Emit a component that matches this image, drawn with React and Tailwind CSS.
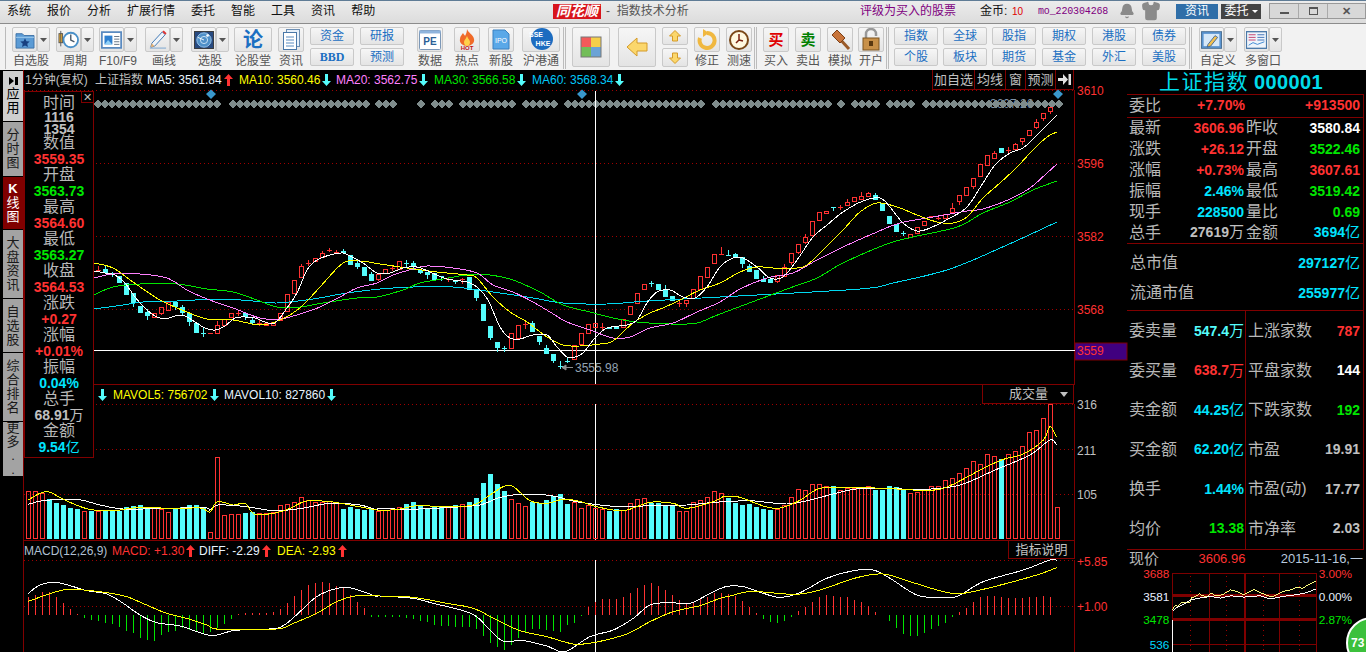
import React from 'react';
import { Bell, Shirt } from 'lucide-react';

const RED = '#ff3232';
const CYAN = '#54fcfc';
const GREEN = '#00e600';
const YELLOW = '#ffff00';
const PINK = '#ff80ff';
const MA30 = '#00e600';
const MA60 = '#00d8f0';

const xOf = (i) => 28 + 7 * i;

// [0 red / 1 cyan, body top, body bottom, wick top, wick bottom], first candle is i=10
const candles = [
  [0,270,270,266,270],[1,269,273,266,274],[1,274,274,272,277],[1,276,283],[1,283,295],[1,293,303,293,307],[1,306,313],[1,312,316,309,320],[0,313,317],[0,307,313,307,315],
  [0,302,310],[1,302,307,302,310],[1,307,313,305,315],[1,313,322,313,326],[1,323,333],[1,333,333,327,337],[0,333,333],[0,325,333,321,333],[0,319,325],[0,313,317],
  [0,313,313,310,316],[1,313,317,313,320],[1,320,323,317,325],[0,323,323,319,326],[0,323,325],[0,322,325,322,326],[0,313,320],[0,294,311],[0,280,293],[0,266,277,264,277],
  [0,263,263,260,266],[0,258,261],[0,253,257,251,257],[0,250,250,248,252],[0,252,252,250,254],[1,251,253,249,254],[1,255,265],[1,263,267,260,269],[1,267,276],[1,274,281,272,281],
  [0,274,279,274,281],[0,269,273],[0,268,268,265,271],[0,261,269],[1,263,263,260,267],[1,263,267,261,270],[1,270,273,270,274],[1,272,275,272,279],[1,273,280],[1,276,276,276,281],
  [0,279,279,277,282],[1,281,281,281,284],[0,279,279,278,284],[1,277,290],[1,289,298,289,301],[1,304,321],[1,326,338,326,340],[1,342,348,342,352],[1,348,348,346,352],[0,333,348],
  [0,325,338],[0,324,324,322,329],[1,323,332,321,332],[1,336,342,336,345],[1,348,354,345,354],[1,354,361,354,363],[1,366,366,361,369],[1,361,361,357,363],[0,345,359],[0,333,344],
  [0,324,333],[0,323,327],[0,327,327,323,330],[1,327,329],[1,327,329],[0,319,327],[0,306,314],[0,293,303],[0,284,289],[1,283,283,281,287],
  [1,284,290],[1,289,297,285,297],[1,296,301],[0,303,303,301,307],[0,300,303,300,307],[0,289,298],[0,276,289],[0,267,277],[0,254,263],[0,254,254,247,254],
  [1,255,255,250,255],[1,254,257,253,257],[1,257,264,257,268],[1,266,272,264,272],[1,270,279],[1,279,282,276,282],[1,279,283,278,283],[0,275,281,275,283],[0,267,276,264,276],[0,253,262,253,265],
  [0,244,252,244,254],[0,237,242,234,244],[0,221,235],[0,212,220],[0,211,213],[1,207,207,207,211],[0,207,207,205,210],[0,202,205,199,205],[0,197,201],[0,196,199,192,199],
  [0,193,196,192,197],[1,195,200,193,200],[1,203,211],[1,216,224],[1,224,232],[1,233,233,231,236],[0,234,237],[0,227,233],[0,221,225],[0,216,216],
  [0,218,218,216,220],[0,214,218],[0,208,212,203,212],[0,195,201,195,205],[0,187,195],[0,178,186,178,189],[0,164,176,164,177],[0,155,165],[0,153,158,151,158],[1,148,153],
  [0,150,150,147,153],[0,144,149,143,150],[0,138,141,138,145],[0,130,135],[0,122,127,119,129],[0,113,118,113,121],[0,107,111,107,114],
];

const ma5 = [[94,271],[105,273],[115,275],[125,283],[135,297],[145,308],[155,316],[165,319],[175,316],[185,316],[195,322],[205,328],[215,330],[225,326],[235,318],[245,317],[255,318],[265,322],[275,323],[287,308],[297,293],[307,270],[317,260],[330,255],[343,253],[352,257],[363,263],[377,273],[390,273],[403,268],[417,267],[430,272],[447,279],[467,282],[477,287],[488,300],[500,327],[510,338],[520,339],[533,335],[547,335],[557,347],[567,357],[575,357],[583,353],[595,338],[607,328],[627,325],[637,320],[647,303],[657,292],[670,290],[683,297],[695,298],[707,287],[720,267],[733,258],[743,258],[757,267],[770,278],[783,277],[797,260],[813,237],[827,225],[843,212],[863,201],[880,198],[890,207],[903,223],[917,231],[930,228],[950,218],[967,207],[983,183],[995,165],[1010,153],[1023,148],[1037,135],[1047,125],[1057,115]];
const ma10 = [[94,263],[113,268],[133,282],[160,300],[187,312],[207,319],[233,320],[260,325],[280,320],[300,308],[320,287],[343,263],[360,261],[380,264],[407,268],[437,272],[467,275],[477,278],[493,297],[510,312],[527,322],[547,337],[563,345],[580,346],[600,344],[613,341],[633,323],[650,313],[663,308],[680,300],[700,290],[720,283],[740,272],[757,267],[773,268],[797,268],[807,265],[823,250],[843,230],[860,212],[877,203],[897,207],[917,215],[937,222],[953,223],[967,217],[983,198],[1000,183],[1017,167],[1033,150],[1047,137],[1057,132]];
const ma20 = [[94,278],[113,274],[140,274],[167,278],[187,290],[207,299],[233,308],[260,318],[280,319],[300,314],[320,307],[340,297],[357,288],[377,283],[393,275],[413,269],[427,266],[453,268],[477,273],[493,285],[513,292],[533,302],[550,312],[567,322],[590,330],[613,338],[630,337],[650,328],[673,323],[697,312],[720,302],[740,289],[767,278],[793,273],[817,260],[843,247],[877,232],[900,223],[933,217],[967,211],[983,209],[1010,199],[1030,188],[1047,173],[1057,164]];
const ma30 = [[94,295],[113,287],[140,284],[177,284],[207,289],[233,292],[257,300],[277,307],[300,307],[323,303],[357,298],[377,297],[403,290],[420,283],[443,279],[467,275],[490,275],[513,280],[540,292],[563,305],[590,312],[613,318],[637,322],[670,324],[697,323],[720,314],[787,289],[817,278],[843,263],[887,244],[913,237],[957,227],[983,213],[1010,202],[1033,190],[1057,181]];
const ma60 = [[94,309],[123,305],[143,302],[177,301],[220,299],[253,301],[277,303],[313,299],[347,293],[380,289],[413,287],[453,287],[493,292],[533,298],[563,303],[607,304],[647,301],[720,297],[860,289],[893,283],[950,269],[1007,245],[1057,222]];

const diamondRuns = [[98,218],[233,366],[379,399],[421,421],[435,449],[463,512],[526,555],[568,702],[716,828],[841,841],[855,876],[890,912],[926,1059]];
const diamonds = diamondRuns.flatMap(([a, b]) => {
  const out = [];
  for (let x = a; x <= b; x += 7) out.push(x);
  return out;
});

const volTops = [
  ...[153,153,160,177,189,195,204,207,213,213,213,212,212,212,200,197,195,207,202,208,216,205,201,195,195,202,277,52,225,223,222,219,216,220,220,215,196,192,186,172,181,186,187,184,190,207,201,206,209,206,214,211,207,202].map((z) => 440 + z / 3),
  ...[192,186,197,206,202,202,199,195,192,186,174,129,102,132,153,178,190,198,185,190,180,168,162,192,185,205,195,205,208,213,208,210,190,178,175,190,190,195,195,214,214,187,181,172,154,160,174].map((z) => 440 + z / 3),
  ...[368,375,372,381,387,390,388,376,352,328,331,313,313,319,319,331,325,325,325,319,331,331,319,322,328,340,337,331,319,319,301,295,280,265,244,253,223,229,238,223,214,199,157,151,115,73,382].map((z) => 380 + z / 3),
];
const volColors =
  'rrrcccccrcrcccccccrrrcccccrrrrrccrrrrrrrrrrrrcccccrrrr' +
  'ccccccrcrccccccrrrccccccrrrrrccrrrrccccrrrrrrrc' +
  'ccccccrrrrrrrrcrrrrrcccccrrrrrrrrrrrrrcrrrrrrrr';

const fromZ = (pts, bx, by) => pts.map(([x, y]) => [bx + x / 3, by + y / 3]);

const volYellow = [
  ...fromZ([[85,180],[120,160],[148,156],[190,178],[250,203],[290,211],[350,211],[400,204],[470,202],[500,207],[600,204],[630,216],[652,185],[700,195],[735,190],[765,223],[830,218],[870,205],[920,183],[990,185],[1050,195],[1130,210]], 0, 440),
  ...fromZ([[0,212],[60,207],[110,197],[200,200],[280,195],[330,165],[370,140],[400,140],[450,182],[500,190],[550,178],[600,184],[650,200],[730,212],[810,187],[880,190],[920,205],[1000,185],[1030,170]], 380, 440),
  ...fromZ([[0,350],[30,352],[100,378],[140,385],[180,375],[220,355],[270,325],[360,323],[470,325],[550,330],[640,325],[760,265],[820,238],[880,222],[940,180],[960,140],[980,172]], 730, 380),
];
const volWhite = [
  ...fromZ([[85,193],[130,182],[230,178],[300,195],[370,207],[470,206],[610,203],[630,210],[655,195],[740,200],[820,212],[900,206],[990,190],[1080,195],[1130,210]], 0, 440),
  ...fromZ([[0,205],[80,208],[200,203],[300,195],[350,175],[400,165],[470,163],[520,168],[600,187],[720,200],[810,197],[920,195],[1000,187]], 380, 440),
  ...fromZ([[0,365],[60,362],[170,372],[240,360],[330,337],[400,325],[560,328],[630,325],[700,312],[800,268],[900,225],[960,180],[980,195]], 730, 380),
];

const macdBars = [
  ...[472,465,455,455,470,490,507,522,535,540,543,550,552,560,572,580,595,600,603,585,575,572,565,570,575,578,575,565,552,538,522,520,519,519,519,517,507,488,468,450,435,430,427,430,438,445,465,487,503,530,532,532,532,532].map((z) => 440 + z / 3),
  ...[533,537,543,546,555,558,558,560,562,560,566,588,610,622,630,615,595,578,568,568,570,572,575,555,548,528,500,487,476,477,477,470,460,444,434,429,437,450,464,480,490,490,478,470,460,458,462].map((z) => 440 + z / 3),
  ...[648,663,680,698,716,725,728,722,710,692,680,665,650,645,647,650,652,660,667,678,697,705,722,745,762,767,767,760,748,738,730,712,696,683,667,652,648,648,652,653,655,653,651,650,648,650].map((z) => 380 + z / 3),
];
const diffLine = [
  ...fromZ([[85,460],[120,435],[165,427],[210,437],[260,452],[320,462],[370,490],[420,525],[470,548],[540,558],[600,578],[640,587],[700,572],[770,568],[830,565],[860,550],[900,515],[950,470],[1000,448],[1040,442],[1090,455],[1130,470]], 0, 440),
  ...fromZ([[0,468],[100,475],[160,490],[250,512],[290,530],[330,570],[370,603],[430,602],[500,618],[555,635],[630,590],[700,570],[760,535],[810,495],[870,488],[930,490],[990,460],[1030,442]], 380, 440),
  ...fromZ([[0,618],[40,620],[100,640],[150,652],[210,638],[290,595],[370,572],[430,570],[480,595],[560,645],[620,652],[680,650],[760,605],[880,570],[960,540],[980,541]], 730, 380),
];
const deaLine = [
  ...fromZ([[85,484],[130,468],[190,450],[250,450],[320,458],[380,470],[440,495],[500,520],[560,535],[620,555],[660,568],[830,567],[880,550],[950,520],[1010,485],[1070,467],[1130,468]], 0, 440),
  ...fromZ([[0,468],[100,472],[200,490],[280,505],[350,540],[420,572],[500,590],[580,612],[640,608],[740,582],[810,545],[880,515],[960,497],[1020,475]], 380, 440),
  ...fromZ([[0,648],[60,634],[120,638],[200,643],[270,630],[380,593],[460,582],[540,605],[640,635],[700,640],[800,618],[920,585],[980,563]], 730, 380),
];

const miniYellow = fromZ([[133,190],[140,178],[150,180],[160,168],[170,170],[185,170],[190,155],[205,148],[215,142],[225,148],[240,150],[250,140],[265,148],[285,145],[310,130],[330,135],[350,145],[380,130],[420,148],[440,150],[470,135],[500,128],[510,122],[530,125],[555,110],[570,104]], 1128, 545);
const miniWhite = fromZ([[133,195],[145,185],[170,172],[190,160],[215,155],[250,150],[280,155],[310,148],[350,152],[400,148],[430,158],[470,150],[510,145],[535,140],[570,128]], 1128, 545);

// smooth line through the read-off points
const smooth = (pts) => {
  let d = `M${pts[0][0]} ${pts[0][1]}`;
  for (let i = 0; i < pts.length - 1; i++) {
    const p0 = pts[i - 1] || pts[i];
    const p1 = pts[i];
    const p2 = pts[i + 1];
    const p3 = pts[i + 2] || p2;
    const c1x = p1[0] + (p2[0] - p0[0]) / 6;
    const c1y = p1[1] + (p2[1] - p0[1]) / 6;
    const c2x = p2[0] - (p3[0] - p1[0]) / 6;
    const c2y = p2[1] - (p3[1] - p1[1]) / 6;
    d += `C${c1x} ${c1y} ${c2x} ${c2y} ${p2[0]} ${p2[1]}`;
  }
  return d;
};

const Curve = ({ pts, color }) => <path d={smooth(pts)} fill="none" stroke={color} strokeWidth="1" shapeRendering="crispEdges" />;

const Dots = ({ y }) => (
  <line x1="24" x2="1074" y1={y + 0.5} y2={y + 0.5} stroke="#a00000" strokeDasharray="1 3" shapeRendering="crispEdges" />
);

const Arr = ({ up, color }) => (
  <svg width="9" height="12" viewBox="0 0 9 12" className="inline-block shrink-0">
    <path d={up ? 'M4.5 0 9 5H6v7H3V5H0z' : 'M4.5 12 9 7H6V0H3v7H0z'} fill={color} />
  </svg>
);

const Legend = ({ color, children, className = '' }) => (
  <span className={`flex items-center gap-[2px] whitespace-nowrap ${className}`} style={{ color }}>
    {children}
  </span>
);

const MainChart = () => (
  <svg viewBox="24 90 1103 294" className="block h-[294px] w-[1103px] overflow-visible">
    <Dots y={90} />
    <Dots y={163} />
    <Dots y={236} />
    <Dots y={309} />
    <line x1="1074.5" x2="1074.5" y1="90" y2="384" stroke="#800000" />
    <rect x="1075" y="343" width="52" height="17" fill="#40007f" stroke="#800000" />
    <text x="1077" y="95" fill={RED} fontSize="12">3610</text>
    <text x="1077" y="168" fill={RED} fontSize="12">3596</text>
    <text x="1077" y="241" fill={RED} fontSize="12">3582</text>
    <text x="1077" y="314" fill={RED} fontSize="12">3568</text>
    <text x="1077" y="355" fill={RED} fontSize="12">3559</text>
    <text x="990" y="108" fill="#7f93a8" fontSize="12">3607.26</text>
    {diamonds.map((x) => (
      <path key={x} d={`M${x - 4.5} 104 ${x} 99.5 ${x + 4.5} 104 ${x} 108.5z`} fill="#7f8c8c" shapeRendering="crispEdges" />
    ))}
    {[211, 582, 1058].map((x) => (
      <path key={x} d={`M${x - 5} 94 ${x} 89.5 ${x + 5} 94 ${x} 99z`} fill="#3a98cc" />
    ))}
    <line x1="24" x2="1075" y1="350.5" y2="350.5" stroke="#fff" shapeRendering="crispEdges" />
    <line x1="595.5" x2="595.5" y1="91" y2="384" stroke="#fff" shapeRendering="crispEdges" />
    <g shapeRendering="crispEdges">
      {candles.map(([kind, top, bot, wt = top, wb = bot], n) => {
        const cx = xOf(n + 10);
        const color = kind ? CYAN : RED;
        return (
          <g key={cx}>
            {wt < top && <line x1={cx + 0.5} x2={cx + 0.5} y1={wt} y2={top} stroke={color} />}
            {wb > bot && <line x1={cx + 0.5} x2={cx + 0.5} y1={bot} y2={wb} stroke={color} />}
            {top === bot ? (
              <line x1={cx - 2} x2={cx + 3} y1={top + 0.5} y2={top + 0.5} stroke={color} />
            ) : kind ? (
              <rect x={cx - 2} y={top} width="5" height={bot - top} fill={color} />
            ) : (
              <rect x={cx - 1.5} y={top + 0.5} width="4" height={bot - top} fill="none" stroke={color} />
            )}
          </g>
        );
      })}
    </g>
    <Curve pts={ma60} color={MA60} />
    <Curve pts={ma30} color={MA30} />
    <Curve pts={ma20} color={PINK} />
    <Curve pts={ma10} color={YELLOW} />
    <Curve pts={ma5} color="#fff" />
    <path d="M562 367.5h11M562 367.5l4-2.5v5z" stroke="#8c8c8c" fill="#8c8c8c" />
    <text x="575" y="372" fill="#93a3b3" fontSize="12">3555.98</text>
  </svg>
);

const VolumeChart = () => (
  <svg viewBox="24 404 1103 136" className="block h-[136px] w-[1103px] overflow-visible">
    <Dots y={404} />
    <Dots y={449} />
    <Dots y={494} />
    <line x1="1074.5" x2="1074.5" y1="404" y2="540" stroke="#800000" />
    <line x1="595.5" x2="595.5" y1="404" y2="540" stroke="#fff" shapeRendering="crispEdges" />
    <text x="1077" y="409" fill="#c0c0c0" fontSize="12">316</text>
    <text x="1077" y="455" fill="#c0c0c0" fontSize="12">211</text>
    <text x="1077" y="499" fill="#c0c0c0" fontSize="12">105</text>
    <g shapeRendering="crispEdges">
      {volTops.map((top, i) => {
        const cx = xOf(i);
        const y = Math.round(top);
        return volColors[i] === 'c' ? (
          <rect key={i} x={cx - 2} y={y} width="5" height={539 - y} fill={CYAN} />
        ) : (
          <rect key={i} x={cx - 1.5} y={y + 0.5} width="4" height={539 - y - 1} fill="none" stroke={RED} />
        );
      })}
    </g>
    <Curve pts={volWhite} color="#fff" />
    <Curve pts={volYellow} color={YELLOW} />
  </svg>
);

const MacdChart = () => (
  <svg viewBox="24 560 1103 92" className="block h-[92px] w-[1103px] overflow-visible">
    <Dots y={560} />
    <Dots y={606} />
    <line x1="1074.5" x2="1074.5" y1="560" y2="652" stroke="#800000" />
    <line x1="595.5" x2="595.5" y1="560" y2="652" stroke="#fff" shapeRendering="crispEdges" />
    <text x="1077" y="566" fill={RED} fontSize="12">+5.85</text>
    <text x="1077" y="611" fill={RED} fontSize="12">+1.00</text>
    <g shapeRendering="crispEdges">
      {macdBars.map((y, i) => (
        <line key={i} x1={xOf(i) + 0.5} x2={xOf(i) + 0.5} y1={y} y2="615" stroke={y < 615 ? RED : GREEN} />
      ))}
    </g>
    <Curve pts={diffLine} color="#fff" />
    <Curve pts={deaLine} color={YELLOW} />
  </svg>
);

const MiniChart = () => (
  <svg viewBox="1128 564 236 88" className="block h-[88px] w-[236px]">
    <g shapeRendering="crispEdges">
      <rect x="1172.5" y="571.5" width="146" height="90" fill="none" stroke="#800000" />
      <line x1="1172" x2="1318" y1="594.5" y2="594.5" stroke="#800000" strokeWidth="3" />
      <line x1="1172" x2="1318" y1="618.5" y2="618.5" stroke="#800000" strokeWidth="3" />
      <line x1="1172" x2="1318" y1="643.5" y2="643.5" stroke="#800000" />
      <line x1="1246" x2="1246" y1="571" y2="652" stroke="#800000" strokeWidth="2" />
      <line x1="1209.5" x2="1209.5" y1="571" y2="652" stroke="#800000" />
      <line x1="1281.5" x2="1281.5" y1="571" y2="652" stroke="#800000" />
      {[1190.5, 1227.5, 1264.5, 1301.5].map((x) => (
        <line key={x} x1={x} x2={x} y1="574" y2="652" stroke="#a00000" strokeDasharray="1 4" />
      ))}
      <line x1="1172.5" x2="1172.5" y1="619" y2="652" stroke="#fff" />
    </g>
    <polyline points={miniYellow.map((p) => p.join(',')).join(' ')} fill="none" stroke="#ffff80" shapeRendering="crispEdges" />
    <polyline points={miniWhite.map((p) => p.join(',')).join(' ')} fill="none" stroke="#fff" shapeRendering="crispEdges" />
    <text x="1169" y="576" textAnchor="end" fill={RED} fontSize="12">3688</text>
    <text x="1169" y="600" textAnchor="end" fill="#e8f0ff" fontSize="12">3581</text>
    <text x="1169" y="623" textAnchor="end" fill={GREEN} fontSize="12">3478</text>
    <text x="1169" y="649" textAnchor="end" fill="#00d8ff" fontSize="12">536</text>
    <text x="1321" y="576" fill={RED} fontSize="12">3.00%</text>
    <text x="1321" y="600" fill="#e8f0ff" fontSize="12">0.00%</text>
    <text x="1321" y="623" fill={GREEN} fontSize="12">2.87%</text>
  </svg>
);

const infoRows = [
  ['时间', 'l'], ['1116', 'g', 'h-[12px] leading-[12px]'], ['1354', 'g', 'h-[12px] leading-[12px]'], ['数值', 'l'], ['3559.35', 'r'], ['开盘', 'l'], ['3563.73', 'n'], ['最高', 'l'], ['3564.60', 'r'], ['最低', 'l'], ['3563.27', 'n'],
  ['收盘', 'l'], ['3564.53', 'r'], ['涨跌', 'l'], ['+0.27', 'r'], ['涨幅', 'l'], ['+0.01%', 'r'], ['振幅', 'l'], ['0.04%', 'c'], ['总手', 'l'], ['68.91万', 'g'], ['金额', 'l'], ['9.54亿', 'c'],
];
const infoColors = { g: '#c0c0c0', r: RED, n: GREEN, c: '#00e4ff' };

const InfoBox = () => (
  <div className="absolute left-0 top-[21px] flex h-[367px] w-[70px] flex-col items-center border border-[#800000] bg-black pt-[3px]">
    <button className="absolute right-0 top-0 flex h-[11px] w-[12px] items-center justify-center border-b border-l border-[#800000] text-[11px] leading-none text-[#c0c0c0]">
      ✕
    </button>
    {infoRows.map(([text, kind, h], i) =>
      kind === 'l' ? (
        <div key={i} className="h-[16px] text-[16px] leading-[16px] text-[#b8b8b8]">{text}</div>
      ) : (
        <div key={i} className={`${h || 'h-[16px] leading-[16px]'} flex items-center text-[14px] font-bold`} style={{ color: infoColors[kind] }}>
          {text.replace(/[万亿]/, '')}
          {/[万亿]/.test(text) && <span className="font-normal">{text.slice(-1)}</span>}
        </div>
      ),
    )}
  </div>
);

const tabs = [
  { text: '应用', cls: 'h-[50px] bg-[#cfcfcf] text-black', head: true },
  { text: '分时图', cls: 'h-[54px] bg-[#a3a3a3] text-[#1a1a1a]' },
  { text: 'K线图', cls: 'h-[52px] bg-[#800000] text-white' },
  { text: '大盘资讯', cls: 'h-[68px] bg-[#a3a3a3] text-[#1a1a1a]' },
  { text: '自选股', cls: 'h-[53px] bg-[#a3a3a3] text-[#1a1a1a]' },
  { text: '综合排名', cls: 'h-[68px] bg-[#a3a3a3] text-[#1a1a1a]' },
  { text: '更多..', cls: 'h-[54px] bg-[#a3a3a3] text-[#1a1a1a]' },
];

const SideTabs = () => (
  <div className="flex w-[23px] shrink-0 flex-col gap-[1px] pl-[3px] pt-[1px]">
    {tabs.map((t) => (
      <div key={t.text} className={`flex w-[20px] flex-col items-center justify-center text-[13px] leading-[14px] ${t.cls}`}>
        {t.head && (
          <svg width="9" height="8" viewBox="0 0 9 8" className="mb-[2px]">
            <path d="M0 0 5 4 0 8zM6 0h3v8H6z" fill="#000" />
          </svg>
        )}
        {[...t.text].map((c, i) => (
          <span key={i} className={c === 'K' ? 'font-bold' : ''}>{c}</span>
        ))}
      </div>
    ))}
  </div>
);

const Val = ({ color, children, unit }) => (
  <span className="flex items-center whitespace-nowrap text-[14px] font-bold" style={{ color }}>
    {children}
    {unit && <span className="text-[15px] font-normal">{unit}</span>}
  </span>
);

const Cell = ({ label, color, value, unit, cls = 'w-[119px]' }) => (
  <div className={`flex items-center justify-between ${cls}`}>
    <span className="whitespace-nowrap text-[16px] leading-[20px] text-[#b8b8b8]">{label}</span>
    <Val color={color} unit={unit}>{value}</Val>
  </div>
);

const quoteRows = [
  ['最新', RED, '3606.96', '昨收', '#fff', '3580.84'],
  ['涨跌', RED, '+26.12', '开盘', GREEN, '3522.46'],
  ['涨幅', RED, '+0.73%', '最高', RED, '3607.61'],
  ['振幅', '#00e4ff', '2.46%', '最低', GREEN, '3519.42'],
  ['现手', '#00e4ff', '228500', '量比', GREEN, '0.69'],
];

const statRows = [
  ['委卖量', CYAN, '547.4', '万', '上涨家数', RED, '787'],
  ['委买量', RED, '638.7', '万', '平盘家数', '#fff', '144'],
  ['卖金额', '#00e4ff', '44.25', '亿', '下跌家数', GREEN, '192'],
  ['买金额', '#00e4ff', '62.20', '亿', '市盈', '#c0c0c0', '19.91'],
  ['换手', '#00e4ff', '1.44%', '', '市盈(动)', '#c0c0c0', '17.77'],
  ['均价', GREEN, '13.38', '', '市净率', '#c0c0c0', '2.03'],
];

const RightPanel = () => (
  <div className="relative flex h-[582px] w-[239px] shrink-0 flex-col overflow-hidden">
    <div className="flex h-[24px] items-center justify-center pr-[11px] font-bold leading-none text-[#00dcea]">
      <span className="text-[21px] font-normal tracking-[1.5px]">上证指数</span>
      <span className="ml-[5px] text-[20px] tracking-[0.4px]">000001</span>
    </div>
    <div className="w-[237px] border-b border-t border-r border-[#800000] pl-[2px] pr-[3px]">
      <div className="flex h-[22px] items-center justify-between">
        <span className="text-[16px] leading-[20px] text-[#b8b8b8]">委比</span>
        <span className="ml-[36px] mr-auto"><Val color={RED}>+7.70%</Val></span>
        <Val color={RED}>+913500</Val>
      </div>
    </div>
    <div className="w-[237px] border-b border-r border-[#800000] px-[2px]">
      <div className="flex h-[125px] flex-col">
        {quoteRows.map(([a, c1, v1, b, c2, v2]) => (
          <div key={a} className="flex h-[21px] items-center gap-[2px]">
            <Cell label={a} color={c1} value={v1} cls="w-[115px]" />
            <Cell label={b} color={c2} value={v2} cls="w-[114px]" />
          </div>
        ))}
        <div className="flex h-[20px] items-center gap-[2px]">
          <Cell label="总手" color="#c0c0c0" value="27619" unit="万" cls="w-[115px]" />
          <Cell label="金额" color="#00e4ff" value="3694" unit="亿" cls="w-[114px]" />
        </div>
      </div>
    </div>
    <div className="w-[237px] border-b border-r border-[#800000] px-[3px]">
      <div className="flex h-[33px] items-end justify-between pb-[2px]">
        <span className="text-[16px] text-[#b8b8b8]">总市值</span>
        <Val color="#00e4ff" unit="亿">297127</Val>
      </div>
      <div className="flex h-[33px] items-center justify-between">
        <span className="text-[16px] text-[#b8b8b8]">流通市值</span>
        <Val color="#00e4ff" unit="亿">255977</Val>
      </div>
    </div>
    <div className="relative flex h-[239px] w-[237px] flex-col border-b border-r border-[#800000] pt-[1px]">
      <div className="absolute left-[118px] top-0 h-full w-px bg-[#800000]" />
      {statRows.map(([a, c1, v1, u, b, c2, v2]) => (
        <div key={a} className="flex h-[39.6px] items-center pl-[2px]">
          <div className="flex w-[115px] items-center justify-between">
            <span className="text-[16px] text-[#b8b8b8]">{a}</span>
            <Val color={c1} unit={u}>{v1}</Val>
          </div>
          <div className="ml-[4px] flex w-[112px] items-center justify-between">
            <span className="whitespace-nowrap text-[16px] text-[#b8b8b8]">{b}</span>
            <Val color={c2}>{v2}</Val>
          </div>
        </div>
      ))}
    </div>
    <div className="flex h-[16px] items-center justify-between pl-[2px] pr-[3px] pt-[3px] text-[13px]">
      <span className="text-[15px] text-[#b8b8b8]">现价</span>
      <span className="ml-[4px] text-[#ff3232]">3606.96</span>
      <span className="text-[#b8c8dc]">2015-11-16,一</span>
    </div>
    <MiniChart />
    <div className="absolute left-[219px] top-[547px] flex h-[52px] w-[52px] items-center rounded-full border-2 border-white bg-[#3cc03c] pl-[3px] text-[12px] font-bold text-white">
      73
    </div>
  </div>
);

const btnFace = 'border border-[#c9c9c9] bg-gradient-to-b from-[#f6f6f6] to-[#e4e4e4] rounded-[2px]';

const ToolBtn = ({ label, cls = 'w-[26px]', arrow, ml, children }) => (
  <div className={`flex shrink-0 flex-col items-center ${cls} ${ml}`}>
    <div className="flex h-[25px] w-full">
      <div className={`flex h-full flex-1 items-center justify-center ${btnFace}`}>{children}</div>
      {arrow && (
        <div className={`flex h-full w-[13px] items-center justify-center ${btnFace}`}>
          <svg width="7" height="4" viewBox="0 0 7 4"><path d="M0 0h7L3.5 4z" fill="#555" /></svg>
        </div>
      )}
    </div>
    <span className="mt-[2px] whitespace-nowrap text-[12px] leading-[14px] text-[#555]">{label}</span>
  </div>
);

const Pair = ({ a, b, ml, boldB }) => (
  <div className={`flex w-[44px] shrink-0 flex-col gap-[3px] ${ml}`}>
    <div className={`flex h-[18px] items-center justify-center text-[12px] text-[#1b6fc2] ${btnFace}`}>{a}</div>
    <div className={`flex h-[18px] items-center justify-center text-[12px] text-[#1b6fc2] ${boldB ? "font-['Liberation_Serif'] font-bold" : ''} ${btnFace}`}>{b}</div>
  </div>
);

const Sep = ({ ml }) => <div className={`h-[42px] w-[3px] shrink-0 border-l border-r border-[#bcbcbc] ${ml}`} />;

const ICO = 'block';
const FolderIcon = () => (
  <svg width="20" height="18" viewBox="0 0 22 20" className={ICO}>
    <path d="M1 3h7l2 2h11v14H1z" fill="#5b9bd5" stroke="#3b6fa5" />
    <path d="M1 7h20" stroke="#a8d0f0" />
    <path d="m11 8 1.6 3.4 3.6.4-2.7 2.4.8 3.6L11 16l-3.3 1.8.8-3.6-2.7-2.4 3.6-.4z" fill="#173f80" />
  </svg>
);
const PeriodIcon = () => (
  <svg width="21" height="20" viewBox="0 0 23 22" className={ICO}>
    <rect x="1" y="4" width="4" height="10" fill="#f0b030" stroke="#555" />
    <path d="M3 1v17" stroke="#555" />
    <circle cx="14" cy="11" r="8" fill="#fff" stroke="#4a90c8" strokeWidth="2" />
    <path d="M14 5v6l4 2" fill="none" stroke="#456" strokeWidth="1.5" />
  </svg>
);
const NewsIcon = () => (
  <svg width="21" height="18" viewBox="0 0 24 20" className={ICO}>
    <rect x="1" y="1" width="22" height="18" fill="#fff" stroke="#5a8ac0" strokeWidth="2" />
    <rect x="4" y="5" width="9" height="10" fill="#2f80d0" />
    <path d="M15 6h6M15 9h6M15 12h6M15 15h6" stroke="#567" />
    <path d="M4 15l4-5 5 5z" fill="#8fd0f8" />
  </svg>
);
const PenIcon = () => (
  <svg width="21" height="21" viewBox="0 0 22 22" className={ICO}>
    <path d="M3 20h17" stroke="#7aa6d0" />
    <path d="M5 15 16 3l3 3L8 18l-4 1z" fill="#f0f4f8" stroke="#3c76b4" />
    <path d="M16 3l3 3 1.500-1.500-3-3z" fill="#d33" />
    <path d="M4 19l1-4 3 3z" fill="#e8b070" />
  </svg>
);
const RadarIcon = () => (
  <svg width="20" height="18" viewBox="0 0 22 20" className={ICO}>
    <rect x="0.500" y="0.500" width="21" height="19" fill="#274a80" stroke="#333" />
    <circle cx="11" cy="10" r="8" fill="#4f90c8" stroke="#9cc8ec" />
    <circle cx="11" cy="10" r="4" fill="none" stroke="#cfe6f8" />
    <circle cx="15" cy="5" r="1.500" fill="#fff" />
    <path d="M11 10 4 7" stroke="#fff" />
  </svg>
);
const DocIcon = () => (
  <svg width="18" height="21" viewBox="0 0 18 21" className={ICO}>
    <rect x="4.500" y="0.500" width="13" height="17" fill="#e6f0fa" stroke="#6d8fb4" />
    <rect x="1.500" y="3.500" width="13" height="17" fill="#fff" stroke="#4a78a8" />
    <path d="M4 8h8M4 11h8M4 14h8M4 17h8" stroke="#5a8cc0" />
  </svg>
);
const PeIcon = () => (
  <svg width="22" height="20" viewBox="0 0 22 20" className={ICO}>
    <rect x="0.500" y="0.500" width="21" height="19" rx="1" fill="#fff" stroke="#7c98b8" />
    <rect x="0.500" y="0.500" width="21" height="3" fill="#8fb4dc" />
    <text x="11" y="15" textAnchor="middle" fontSize="10" fontWeight="700" fill="#2b5f96">PE</text>
  </svg>
);
const HotIcon = () => (
  <svg width="20" height="22" viewBox="0 0 20 22" className={ICO}>
    <path d="M10 0c1 4 6 5 7 10 1 4-3 7-7 7s-8-3-7-7c0-3 2-4 3-6 1 2 2 2 2 3 1-2 2-4 2-7z" fill="#f06a28" />
    <path d="M10 7c1 3 3 4 3 6s-1 4-3 4-3-2-3-4 2-3 3-6z" fill="#ffd24a" />
    <text x="10" y="21" textAnchor="middle" fontSize="6" fontWeight="700" fill="#c01818">HOT</text>
  </svg>
);
const IpoIcon = () => (
  <svg width="18" height="21" viewBox="0 0 18 21" className={ICO}>
    <path d="M1 1h12l4 4v15H1z" fill="#5aa8e8" stroke="#3a80c0" />
    <text x="9" y="14" textAnchor="middle" fontSize="7" fill="#fff">IPO</text>
  </svg>
);
const HkIcon = () => (
  <svg width="30" height="23" viewBox="0 0 30 23" className={ICO}>
    <circle cx="16" cy="11" r="11" fill="#1c6cc0" />
    <text x="10" y="9" textAnchor="middle" fontSize="7" fontWeight="700" fill="#fff">SSE</text>
    <text x="17" y="18" textAnchor="middle" fontSize="7" fontWeight="700" fill="#fff">HKE</text>
  </svg>
);
const PaletteIcon = () => (
  <svg width="22" height="22" viewBox="0 0 22 22" className={ICO}>
    <rect x="1" y="1" width="10" height="10" fill="#f25a5a" />
    <rect x="11" y="1" width="10" height="10" fill="#f5cf4a" />
    <rect x="1" y="11" width="10" height="10" fill="#72bd58" />
    <rect x="11" y="11" width="10" height="10" fill="#6ba3d6" />
    <rect x="1" y="1" width="20" height="20" fill="none" stroke="#777" />
  </svg>
);
const BackIcon = () => (
  <svg width="22" height="20" viewBox="0 0 22 20" className={ICO}>
    <path d="M1 10 11 1v5h10v8H11v5z" fill="#fbd76c" stroke="#d49a28" />
  </svg>
);
const UpDown = ({ down }) => (
  <svg width="12" height="12" viewBox="0 0 12 12" className={ICO}>
    <path d={down ? 'M6 11.500 11.500 6H8.500V1h-5v5H.5z' : 'M6 .5 11.500 6H8.500v5h-5V6H.5z'} fill="#fbd76c" stroke="#d49a28" />
  </svg>
);
const RefreshIcon = () => (
  <svg width="20" height="21" viewBox="0 0 20 21" className={ICO}>
    <path d="M10 4a7.500 7.500 0 1 1-7 5" fill="none" stroke="#f0b840" strokeWidth="4" />
    <path d="M6 0l6 4-6 4z" fill="#f0b840" />
  </svg>
);
const ClockIcon = () => (
  <svg width="20" height="20" viewBox="0 0 20 20" className={ICO}>
    <circle cx="10" cy="10" r="9" fill="#fff8e0" stroke="#7a4818" strokeWidth="2" />
    <path d="M10 4v6l-3 3M10 10l4 1" fill="none" stroke="#7a2010" strokeWidth="1.500" />
  </svg>
);
const GavelIcon = () => (
  <svg width="21" height="22" viewBox="0 0 21 22" className={ICO}>
    <path d="M9 9 19 20" stroke="#9a5a28" strokeWidth="3" />
    <path d="M7 1l8 8-5 5-8-8z" fill="#c8743a" stroke="#7c4018" />
  </svg>
);
const LockIcon = () => (
  <svg width="20" height="23" viewBox="0 0 20 23" className={ICO}>
    <path d="M5 11V6a5 5 0 0 1 10 0v2" fill="none" stroke="#999" strokeWidth="2.500" />
    <rect x="2" y="10" width="16" height="12" fill="#c89048" stroke="#7c5420" />
    <rect x="8" y="13" width="4" height="5" fill="#5a3810" />
  </svg>
);
const CustomIcon = () => (
  <svg width="21" height="18" viewBox="0 0 24 20" className={ICO}>
    <rect x="0.500" y="0.500" width="23" height="19" fill="#5a94d0" stroke="#44698c" />
    <rect x="3" y="3" width="18" height="14" fill="#d6e8f8" />
    <path d="m8 15 8-10 3 2-8 10-4 1z" fill="#f2c050" stroke="#3a6090" />
  </svg>
);
const MultiIcon = () => (
  <svg width="21" height="18" viewBox="0 0 24 20" className={ICO}>
    <rect x="0.500" y="0.500" width="23" height="19" fill="#eef4fb" stroke="#4a78a8" strokeWidth="1.500" />
    <path d="M3 4h8M3 7h8M3 10h8" stroke="#c03060" />
    <path d="M13 4h8M13 7h8M13 10h8" stroke="#2f66b0" />
    <path d="M3 16l5-3 5 2 8-3" fill="none" stroke="#2f80d0" />
  </svg>
);

const Menu = () => (
  <div className="flex h-[23px] items-center border-t border-[#5f7c96] bg-gradient-to-b from-[#ececec] to-[#dcdcdc] pb-[2px] text-[12px] text-[#111]">
    <div className="flex w-[553px] shrink-0 gap-[16px] pl-[7px]">
      {['系统', '报价', '分析', '扩展行情', '委托', '智能', '工具', '资讯', '帮助'].map((m) => (
        <span key={m}>{m}</span>
      ))}
    </div>
    <span className="w-[48px] shrink-0 bg-[#d8141c] text-center text-[14px] font-bold italic leading-[15px] text-white">同花顺</span>
    <span className="ml-[5px] w-[254px] shrink-0 whitespace-pre text-[#555]">-  指数技术分析</span>
    <span className="w-[120px] shrink-0 text-[#800080]">评级为买入的股票</span>
    <span className="w-[32px] shrink-0">金币:</span>
    <span className="w-[26px] shrink-0 text-[10px] text-[#e00000]">10</span>
    <span className="w-[81px] shrink-0 font-['Liberation_Mono'] text-[10px] tracking-[-0.15px] text-[#800080]">mo_220304268</span>
    <Bell size={16} className="shrink-0 fill-[#8a8a8a] text-[#8a8a8a]" />
    <Shirt size={20} className="ml-[6px] shrink-0 fill-[#8a8a8a] text-[#8a8a8a]" />
    <span className="ml-[15px] flex h-[15px] w-[42px] shrink-0 items-center justify-center bg-[#2f6ea8] text-white">资讯</span>
    <span className="ml-[3px] flex h-[15px] w-[40px] shrink-0 items-center justify-center gap-[3px] bg-[#444] text-white">
      委托
      <svg width="6" height="3" viewBox="0 0 6 3"><path d="M0 0h6L3 3z" fill="#fff" /></svg>
    </span>
    <div className="ml-[8px] flex h-[16px] flex-1 border border-[#999] bg-[#d8d8d8]">
      <span className="flex w-[29px] items-center justify-center border-r border-[#aaa]"><span className="mt-[4px] h-[2px] w-[9px] bg-[#555]" /></span>
      <span className="flex w-[29px] items-center justify-center border-r border-[#aaa]"><span className="h-[8px] w-[9px] border border-t-2 border-[#555]" /></span>
      <span className="flex flex-1 items-center justify-center text-[11px] font-bold text-[#555]">✕</span>
    </div>
  </div>
);

const Toolbar = () => (
  <div className="flex h-[47px] items-start border-t border-[#8c8c8c] bg-[#f2f2f2] pl-[5px] pt-[3px]">
    <div className="h-[42px] w-[3px] shrink-0 border-l border-[#bbb]" />
    <ToolBtn label="自选股" cls="w-[38px]" ml="ml-[4px]" arrow><FolderIcon /></ToolBtn>
    <ToolBtn label="周期" cls="w-[38px]" ml="ml-[6px]" arrow><PeriodIcon /></ToolBtn>
    <ToolBtn label="F10/F9" cls="w-[38px]" ml="ml-[5px]" arrow><NewsIcon /></ToolBtn>
    <ToolBtn label="画线" cls="w-[38px]" ml="ml-[8px]" arrow><PenIcon /></ToolBtn>
    <ToolBtn label="选股" cls="w-[38px]" ml="ml-[8px]" arrow><RadarIcon /></ToolBtn>
    <ToolBtn label="论股堂" cls="w-[38px]" ml="ml-[5px]">
      <span className="text-[20px] font-bold leading-none text-[#1b6fc2]">论</span>
    </ToolBtn>
    <ToolBtn label="资讯" ml="ml-[6px]"><DocIcon /></ToolBtn>
    <Pair a="资金" b="BBD" ml="ml-[6px]" boldB />
    <Pair a="研报" b="预测" ml="ml-[6px]" />
    <ToolBtn label="数据" ml="ml-[13px]"><PeIcon /></ToolBtn>
    <ToolBtn label="热点" ml="ml-[11px]"><HotIcon /></ToolBtn>
    <ToolBtn label="新股" ml="ml-[8px]"><IpoIcon /></ToolBtn>
    <ToolBtn label="沪港通" cls="w-[38px]" ml="ml-[8px]"><HkIcon /></ToolBtn>
    <Sep ml="ml-[3px]" />
    <div className={`ml-[6px] flex h-[40px] w-[38px] shrink-0 items-center justify-center ${btnFace}`}><PaletteIcon /></div>
    <div className={`ml-[8px] flex h-[40px] w-[38px] shrink-0 items-center justify-center ${btnFace}`}><BackIcon /></div>
    <div className="ml-[6px] flex w-[26px] shrink-0 flex-col gap-[3px]">
      <div className={`flex h-[18px] items-center justify-center ${btnFace}`}><UpDown /></div>
      <div className={`flex h-[19px] items-center justify-center ${btnFace}`}><UpDown down /></div>
    </div>
    <ToolBtn label="修正" ml="ml-[6px]"><RefreshIcon /></ToolBtn>
    <ToolBtn label="测速" ml="ml-[6px]"><ClockIcon /></ToolBtn>
    <Sep ml="ml-[2px]" />
    <ToolBtn label="买入" ml="ml-[6px]"><span className="text-[15px] font-bold leading-none text-[#e00000]">买</span></ToolBtn>
    <ToolBtn label="卖出" ml="ml-[6px]"><span className="text-[15px] font-bold leading-none text-[#008000]">卖</span></ToolBtn>
    <ToolBtn label="模拟" ml="ml-[6px]"><GavelIcon /></ToolBtn>
    <ToolBtn label="开户" ml="ml-[5px]"><LockIcon /></ToolBtn>
    <Sep ml="ml-[2px]" />
    <Pair a="指数" b="个股" ml="ml-[5px]" />
    <Pair a="全球" b="板块" ml="ml-[5px]" />
    <Pair a="股指" b="期货" ml="ml-[5px]" />
    <Pair a="期权" b="基金" ml="ml-[6px]" />
    <Pair a="港股" b="外汇" ml="ml-[6px]" />
    <Pair a="债券" b="美股" ml="ml-[6px]" />
    <Sep ml="ml-[3px]" />
    <ToolBtn label="自定义" cls="w-[38px]" ml="ml-[7px]" arrow><CustomIcon /></ToolBtn>
    <ToolBtn label="多窗口" cls="w-[38px]" ml="ml-[7px]" arrow><MultiIcon /></ToolBtn>
  </div>
);

const PaneBtn = ({ cls, children }) => (
  <span className={`flex h-full items-center justify-center border-l border-[#800000] text-[13px] text-[#c0c0c0] ${cls}`}>{children}</span>
);

const Charts = () => (
  <div className="relative flex h-[582px] w-[1104px] shrink-0 flex-col border-l border-[#800000]">
    <div className="flex h-[20px] w-[1051px] items-center text-[12px] text-[#c0c0c0]">
      <span className="ml-[1px] w-[70px] whitespace-nowrap">1分钟(复权)</span>
      <span className="w-[52px] whitespace-nowrap">上证指数</span>
      <Legend color="#e8f4ff" className="w-[92px]">MA5: 3561.84 <Arr up color={RED} /></Legend>
      <Legend color={YELLOW} className="w-[97px]">MA10: 3560.46 <Arr color={CYAN} /></Legend>
      <Legend color={PINK} className="w-[98px]">MA20: 3562.75 <Arr color={CYAN} /></Legend>
      <Legend color={GREEN} className="w-[98px]">MA30: 3566.58 <Arr color={CYAN} /></Legend>
      <Legend color="#00c8f8" className="w-[400px]">MA60: 3568.34 <Arr color={CYAN} /></Legend>
      <div className="flex h-full border-b border-[#800000]">
        <PaneBtn cls="w-[42px]">加自选</PaneBtn>
        <PaneBtn cls="w-[31px]">均线</PaneBtn>
        <PaneBtn cls="w-[20px]">窗</PaneBtn>
        <PaneBtn cls="w-[30px]">预测</PaneBtn>
        <PaneBtn cls="w-[19px] border-r">
          <svg width="13" height="11" viewBox="0 0 13 11"><path d="M0 4h5V0l5 5.500L5 11V7H0zM10.500 0H13v11h-2.500z" fill="#e0e0e0" /></svg>
        </PaneBtn>
      </div>
    </div>
    <MainChart />
    <div className="flex h-[20px] w-[1051px] items-center border-t border-[#800000] text-[12px]">
      <span className="ml-[74px]"><Arr color={CYAN} /></span>
      <Legend color={YELLOW} className="ml-[6px] w-[111px]">MAVOL5: 756702 <Arr color={CYAN} /></Legend>
      <Legend color="#e8f4ff" className="w-[758px]">MAVOL10: 827860 <Arr color={CYAN} /></Legend>
      <div className="flex h-full w-[92px] items-center justify-between border-x border-b border-[#800000] pl-[26px] pr-[5px] text-[13px] text-[#c0c0c0]">
        成交量
        <svg width="8" height="5" viewBox="0 0 8 5"><path d="M0 0h8L4 5z" fill="#c0c0c0" /></svg>
      </div>
    </div>
    <VolumeChart />
    <div className="flex h-[20px] w-[1051px] items-center border-t border-[#800000] text-[12px]">
      <span className="w-[88px] whitespace-nowrap text-[#b0c0d4]">MACD(12,26,9)</span>
      <Legend color={RED} className="w-[87px]">MACD: +1.30 <Arr up color={RED} /></Legend>
      <Legend color="#e8f4ff" className="w-[78px]">DIFF: -2.29 <Arr up color={RED} /></Legend>
      <Legend color={YELLOW} className="w-[731px]">DEA: -2.93 <Arr up color={RED} /></Legend>
      <div className="flex h-[18px] w-[67px] self-start items-center justify-center border-x border-b border-[#800000] text-[13px] text-[#c0c0c0]">指标说明</div>
    </div>
    <MacdChart />
    <InfoBox />
  </div>
);

const App = () => (
  <div className="h-[652px] w-[1366px] overflow-hidden bg-black font-['Liberation_Sans','Noto_Sans_CJK_SC',sans-serif]">
    <Menu />
    <Toolbar />
    <div className="flex h-[582px] bg-black">
      <SideTabs />
      <Charts />
      <RightPanel />
    </div>
  </div>
);

export default App;
